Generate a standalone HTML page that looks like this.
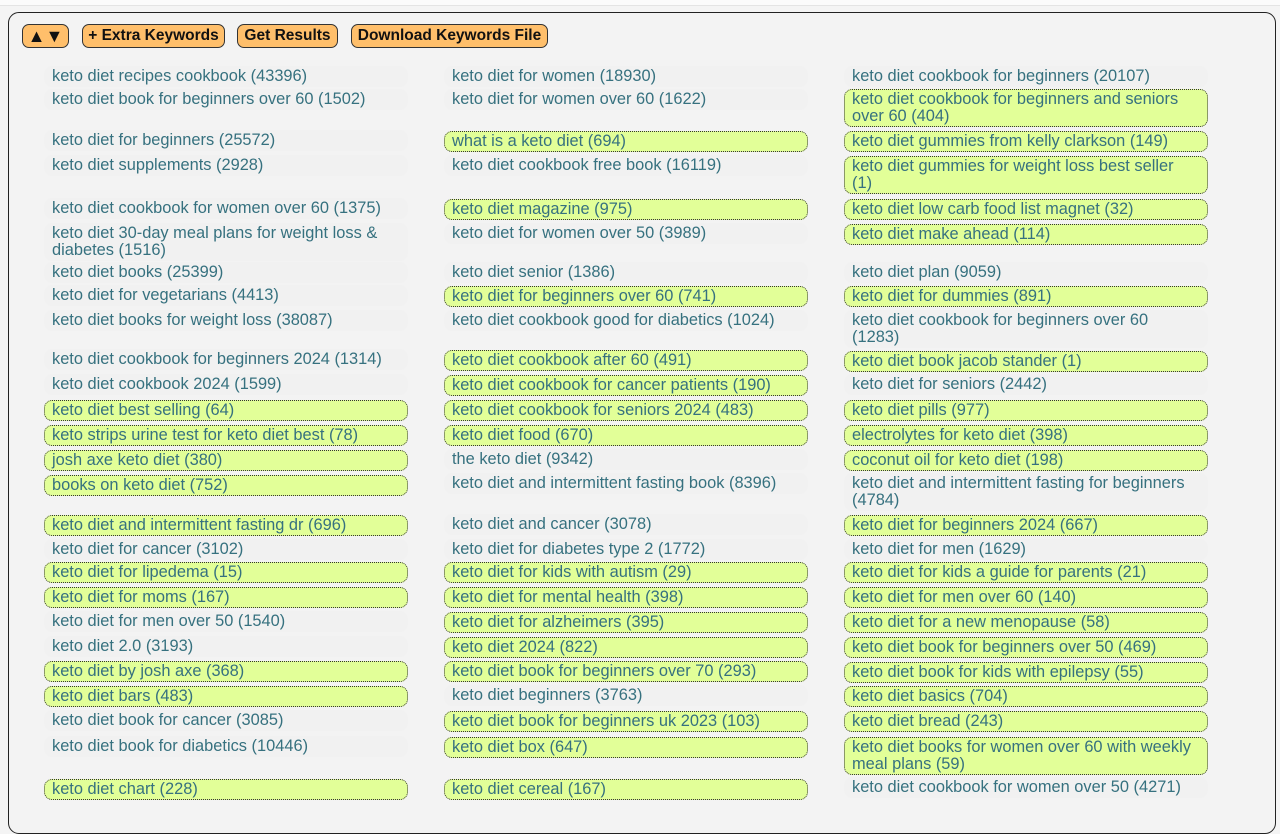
<!DOCTYPE html>
<html><head><meta charset="utf-8"><style>
body{margin:0;width:1280px;height:800px;background:#f4f4f4;font-family:"Liberation Sans",Arial,sans-serif;overflow:hidden;position:relative}
.top{position:absolute;left:0;top:0;width:1280px;height:5px;background:#fbfbfb;border-bottom:1px solid #e4e4e4}
.box{position:absolute;left:8px;top:12px;width:1266px;height:820px;border:1.5px solid #222;border-radius:11px;background:#f3f3f3}
.btn{position:absolute;top:24px;height:22px;border:1.5px solid #333;border-radius:7px;background:#ffbf6b;font-weight:bold;font-size:15.5px;line-height:22px;text-align:center;color:#111}
.i{position:absolute;width:340px;padding:1px 15px 1px 7px;font-size:16.4px;line-height:17px;color:#36717f;border:1px solid transparent;border-radius:8px;box-sizing:content-box;background:#f1f1f1}
.h{background:#e2ff98;border:1px dotted #333}
</style></head><body>
<div class="top"></div>
<div class="box"></div>
<div class="btn" style="left:22px;width:45px;font-size:18px">▲▼</div>
<div class="btn" style="left:82px;width:141px">+ Extra Keywords</div>
<div class="btn" style="left:237px;width:99px">Get Results</div>
<div class="btn" style="left:351px;width:195px">Download Keywords File</div>

<div class="i" style="left:44px;top:66px">keto diet recipes cookbook (43396)</div>
<div class="i" style="left:44px;top:89px">keto diet book for beginners over 60 (1502)</div>
<div class="i" style="left:44px;top:130px">keto diet for beginners (25572)</div>
<div class="i" style="left:44px;top:155px">keto diet supplements (2928)</div>
<div class="i" style="left:44px;top:198px">keto diet cookbook for women over 60 (1375)</div>
<div class="i" style="left:44px;top:223px">keto diet 30-day meal plans for weight loss &amp; diabetes (1516)</div>
<div class="i" style="left:44px;top:262px">keto diet books (25399)</div>
<div class="i" style="left:44px;top:285px">keto diet for vegetarians (4413)</div>
<div class="i" style="left:44px;top:310px">keto diet books for weight loss (38087)</div>
<div class="i" style="left:44px;top:349px">keto diet cookbook for beginners 2024 (1314)</div>
<div class="i" style="left:44px;top:374px">keto diet cookbook 2024 (1599)</div>
<div class="i h" style="left:44px;top:400px">keto diet best selling (64)</div>
<div class="i h" style="left:44px;top:425px">keto strips urine test for keto diet best (78)</div>
<div class="i h" style="left:44px;top:450px">josh axe keto diet (380)</div>
<div class="i h" style="left:44px;top:475px">books on keto diet (752)</div>
<div class="i h" style="left:44px;top:515px">keto diet and intermittent fasting dr (696)</div>
<div class="i" style="left:44px;top:539px">keto diet for cancer (3102)</div>
<div class="i h" style="left:44px;top:562px">keto diet for lipedema (15)</div>
<div class="i h" style="left:44px;top:587px">keto diet for moms (167)</div>
<div class="i" style="left:44px;top:611px">keto diet for men over 50 (1540)</div>
<div class="i" style="left:44px;top:636px">keto diet 2.0 (3193)</div>
<div class="i h" style="left:44px;top:661px">keto diet by josh axe (368)</div>
<div class="i h" style="left:44px;top:686px">keto diet bars (483)</div>
<div class="i" style="left:44px;top:710px">keto diet book for cancer (3085)</div>
<div class="i" style="left:44px;top:736px">keto diet book for diabetics (10446)</div>
<div class="i h" style="left:44px;top:779px">keto diet chart (228)</div>

<div class="i" style="left:444px;top:66px">keto diet for women (18930)</div>
<div class="i" style="left:444px;top:89px">keto diet for women over 60 (1622)</div>
<div class="i h" style="left:444px;top:131px">what is a keto diet (694)</div>
<div class="i" style="left:444px;top:155px">keto diet cookbook free book (16119)</div>
<div class="i h" style="left:444px;top:199px">keto diet magazine (975)</div>
<div class="i" style="left:444px;top:223px">keto diet for women over 50 (3989)</div>
<div class="i" style="left:444px;top:262px">keto diet senior (1386)</div>
<div class="i h" style="left:444px;top:286px">keto diet for beginners over 60 (741)</div>
<div class="i" style="left:444px;top:310px">keto diet cookbook good for diabetics (1024)</div>
<div class="i h" style="left:444px;top:350px">keto diet cookbook after 60 (491)</div>
<div class="i h" style="left:444px;top:375px">keto diet cookbook for cancer patients (190)</div>
<div class="i h" style="left:444px;top:400px">keto diet cookbook for seniors 2024 (483)</div>
<div class="i h" style="left:444px;top:425px">keto diet food (670)</div>
<div class="i" style="left:444px;top:449px">the keto diet (9342)</div>
<div class="i" style="left:444px;top:473px">keto diet and intermittent fasting book (8396)</div>
<div class="i" style="left:444px;top:514px">keto diet and cancer (3078)</div>
<div class="i" style="left:444px;top:539px">keto diet for diabetes type 2 (1772)</div>
<div class="i h" style="left:444px;top:562px">keto diet for kids with autism (29)</div>
<div class="i h" style="left:444px;top:587px">keto diet for mental health (398)</div>
<div class="i h" style="left:444px;top:612px">keto diet for alzheimers (395)</div>
<div class="i h" style="left:444px;top:637px">keto diet 2024 (822)</div>
<div class="i h" style="left:444px;top:661px">keto diet book for beginners over 70 (293)</div>
<div class="i" style="left:444px;top:685px">keto diet beginners (3763)</div>
<div class="i h" style="left:444px;top:711px">keto diet book for beginners uk 2023 (103)</div>
<div class="i h" style="left:444px;top:737px">keto diet box (647)</div>
<div class="i h" style="left:444px;top:779px">keto diet cereal (167)</div>

<div class="i" style="left:844px;top:66px">keto diet cookbook for beginners (20107)</div>
<div class="i h" style="left:844px;top:89px">keto diet cookbook for beginners and seniors over 60 (404)</div>
<div class="i h" style="left:844px;top:131px">keto diet gummies from kelly clarkson (149)</div>
<div class="i h" style="left:844px;top:156px">keto diet gummies for weight loss best seller (1)</div>
<div class="i h" style="left:844px;top:199px">keto diet low carb food list magnet (32)</div>
<div class="i h" style="left:844px;top:224px">keto diet make ahead (114)</div>
<div class="i" style="left:844px;top:262px">keto diet plan (9059)</div>
<div class="i h" style="left:844px;top:286px">keto diet for dummies (891)</div>
<div class="i" style="left:844px;top:310px">keto diet cookbook for beginners over 60 (1283)</div>
<div class="i h" style="left:844px;top:351px">keto diet book jacob stander (1)</div>
<div class="i" style="left:844px;top:374px">keto diet for seniors (2442)</div>
<div class="i h" style="left:844px;top:400px">keto diet pills (977)</div>
<div class="i h" style="left:844px;top:425px">electrolytes for keto diet (398)</div>
<div class="i h" style="left:844px;top:450px">coconut oil for keto diet (198)</div>
<div class="i" style="left:844px;top:473px">keto diet and intermittent fasting for beginners (4784)</div>
<div class="i h" style="left:844px;top:515px">keto diet for beginners 2024 (667)</div>
<div class="i" style="left:844px;top:539px">keto diet for men (1629)</div>
<div class="i h" style="left:844px;top:562px">keto diet for kids a guide for parents (21)</div>
<div class="i h" style="left:844px;top:587px">keto diet for men over 60 (140)</div>
<div class="i h" style="left:844px;top:612px">keto diet for a new menopause (58)</div>
<div class="i h" style="left:844px;top:637px">keto diet book for beginners over 50 (469)</div>
<div class="i h" style="left:844px;top:662px">keto diet book for kids with epilepsy (55)</div>
<div class="i h" style="left:844px;top:686px">keto diet basics (704)</div>
<div class="i h" style="left:844px;top:711px">keto diet bread (243)</div>
<div class="i h" style="left:844px;top:737px">keto diet books for women over 60 with weekly meal plans (59)</div>
<div class="i" style="left:844px;top:777px">keto diet cookbook for women over 50 (4271)</div>
</body></html>
